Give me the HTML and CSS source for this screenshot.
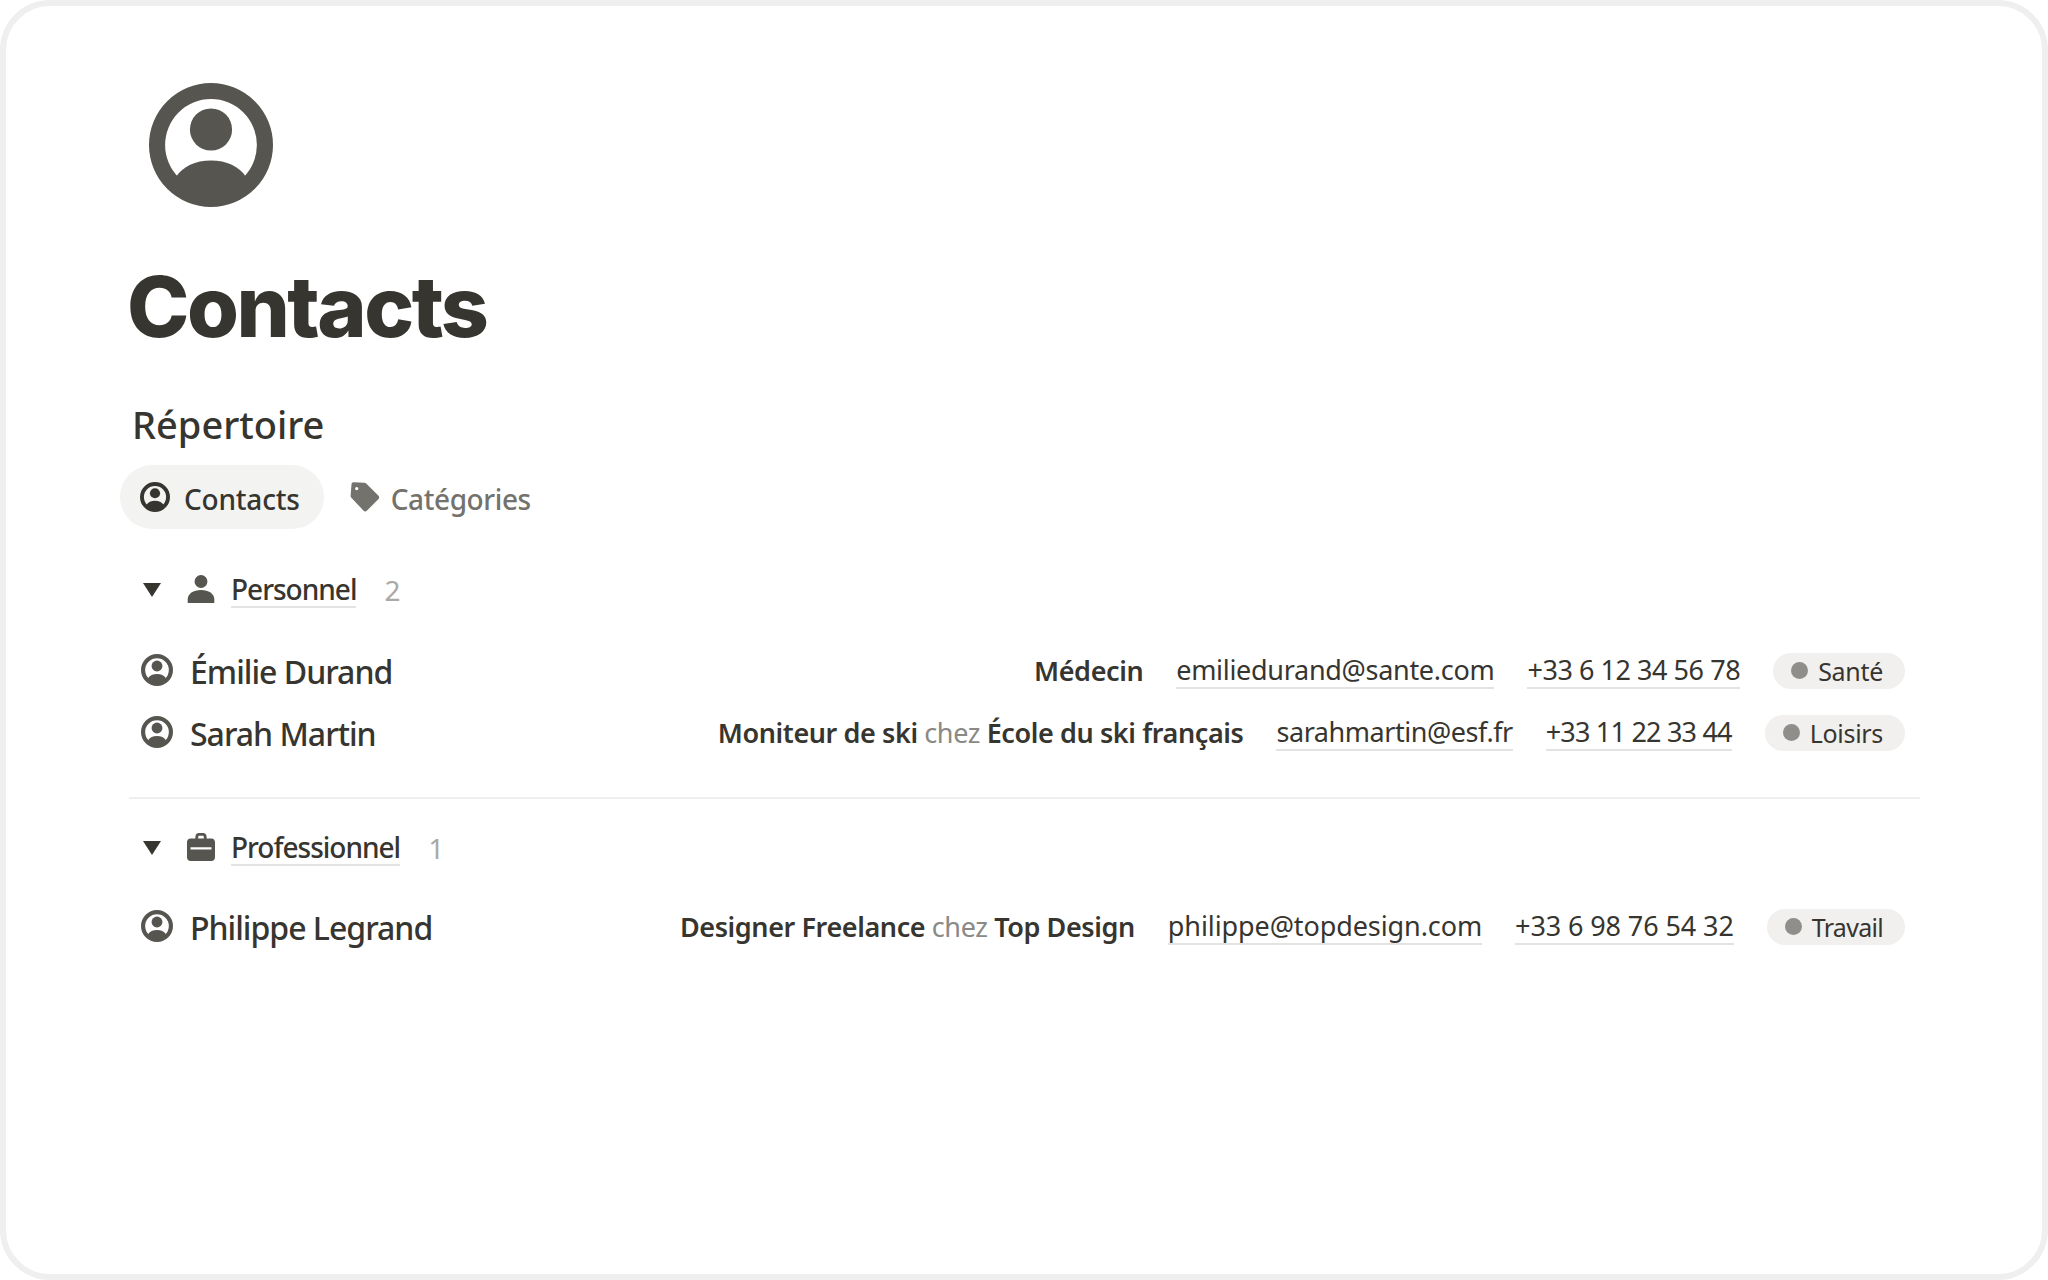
FILE: index.html
```html
<!DOCTYPE html>
<html lang="fr">
<head>
    <meta charset="UTF-8">
    <title>Contacts</title>
    <link rel="stylesheet" href="styles.css">
</head>
<body>
    <svg class="sprite" width="0" height="0">
        <symbol id="contact" viewBox="0 0 20 20">
            <path fill-rule="evenodd" d="M10 0a10 10 0 1 1 0 20a10 10 0 0 1 0-20zM10 2.6a7.4 7.4 0 1 0 0 14.8a7.4 7.4 0 0 0 0-14.8z"/>
            <ellipse cx="10" cy="7.5" rx="3.4" ry="3.4"/>
            <path d="M4.4 15.1C5.4 13.5 7.5 12.5 10 12.5S14.6 13.5 15.6 15.1L15 17.5H5z"/>
        </symbol>
    </svg>
    <main class="page">
        <svg class="avatar"><use href="#contact"/></svg>
        <h1 class="title">Contacts</h1>
        <h2 class="subtitle">Répertoire</h2>
        <nav class="tabs">
            <a class="tab tab-active"><svg class="tab-icon"><use href="#contact"/></svg>Contacts</a>
            <a class="tab">
                <svg class="tab-icon tag-icon" viewBox="0 0 20 20"><path fill-rule="evenodd" d="M1 1.5C1 .8 1.6.2 2.3.2L9.6.5c.5 0 .9.2 1.2.5l8.2 8.2c.6.6.6 1.500 0 2.100l-7.800 7.900c-.6.6-1.500.6-2.100 0L.9 10.500C.6 10.200.4 9.800.4 9.300zM4.500 3.300a1.100 1.100 0 1 0 0 2.200a1.100 1.100 0 0 0 0-2.200z"/></svg>Catégories
            </a>
        </nav>

        <section class="group">
            <div class="group-head">
                <span class="caret"></span>
                <svg class="group-icon" viewBox="0 0 20 20"><circle cx="10" cy="4.600" r="4.600"/><path d="M.5 20v-2.500C.5 13.500 4.500 10.800 10 10.800s9.500 2.700 9.500 6.700V20z"/></svg>
                <span class="group-name">Personnel</span>
                <span class="group-count">2</span>
            </div>
            <div class="row">
                <svg class="row-icon"><use href="#contact"/></svg>
                <span class="name">Émilie Durand</span>
                <div class="details">
                    <span class="job">Médecin</span>
                    <span class="link link-mid">emiliedurand@sante.com</span>
                    <span class="link">+33 6 12 34 56 78</span>
                    <span class="badge"><i class="dot"></i>Santé</span>
                </div>
            </div>
            <div class="row">
                <svg class="row-icon"><use href="#contact"/></svg>
                <span class="name">Sarah Martin</span>
                <div class="details">
                    <span class="job">Moniteur de ski <em>chez</em> École du ski français</span>
                    <span class="link">sarahmartin@esf.fr</span>
                    <span class="link link-tight">+33 11 22 33 44</span>
                    <span class="badge"><i class="dot"></i>Loisirs</span>
                </div>
            </div>
        </section>

        <section class="group group-next">
            <div class="group-head">
                <span class="caret"></span>
                <svg class="group-icon" viewBox="0 0 20 20"><path fill-rule="evenodd" d="M6 4V2.500C6 1.100 7.100 0 8.500 0h3C12.900 0 14 1.100 14 2.500V4h3.500C18.900 4 20 5.100 20 6.500v11c0 1.400-1.100 2.500-2.500 2.500h-15C1.100 20 0 18.900 0 17.500v-11C0 5.100 1.100 4 2.500 4zM8 4h4V2.800c0-.4-.3-.8-.8-.8H8.800c-.5 0-.8.4-.8.800zM2.500 10.200v1.600h15v-1.600z"/></svg>
                <span class="group-name">Professionnel</span>
                <span class="group-count">1</span>
            </div>
            <div class="row">
                <svg class="row-icon"><use href="#contact"/></svg>
                <span class="name">Philippe Legrand</span>
                <div class="details">
                    <span class="job">Designer Freelance <em>chez</em> Top Design</span>
                    <span class="link link-wide">philippe@topdesign.com</span>
                    <span class="link link-wide">+33 6 98 76 54 32</span>
                    <span class="badge badge-tight"><i class="dot"></i>Travail</span>
                </div>
            </div>
        </section>
    </main>
</body>
</html>
```

FILE: styles.css
```css
html, body {
    margin: 0;
    height: 100%;
    background: #fff;
}
body {
    font-family: "Noto Sans", sans-serif;
    color: #37352f;
}
.sprite {
    display: block;
    height: 0;
}
.page {
    box-sizing: border-box;
    height: 1280px;
    padding: 77px 122px 0 123px;
    border: 6px solid #efefef;
    border-radius: 50px;
}
.avatar {
    display: block;
    width: 124px;
    height: 124px;
    margin-left: 20px;
    fill: #56554f;
}
.title {
    margin: 56px 0 0 -2px;
    font-family: Inter, sans-serif;
    font-size: 84px;
    font-weight: 800;
    line-height: 88px;
    letter-spacing: -2.500px;
}
.subtitle {
    margin: 47px 0 0 3px;
    font-size: 38px;
    font-weight: 500;
    line-height: 52px;
}
.tabs {
    display: flex;
    gap: 6px;
    margin: 15px 0 0 -8px;
}
.tab {
    box-sizing: border-box;
    display: flex;
    align-items: center;
    gap: 14px;
    height: 64px;
    padding: 4px 24px 0 20px;
    border-radius: 32px;
    font-size: 28px;
    font-weight: 500;
    letter-spacing: -0.400px;
    color: #73726d;
}
.tab-active {
    background: #f3f3f2;
    color: #37352f;
    margin-left: -1px;
    letter-spacing: -0.200px;
}
.tab-icon {
    width: 30px;
    height: 30px;
    fill: #37352f;
    margin-top: -4px;
}
.tag-icon {
    margin-right: -3px;
    fill: #73726d;
}
.group {
    margin-top: 36px;
    padding-bottom: 33px;
    border-bottom: 2px solid #efefef;
}
.group-next {
    margin-top: 24px;
    border-bottom: 0;
}
.group-head {
    display: flex;
    align-items: center;
    height: 50px;
    margin-bottom: 25px;
    font-size: 28px;
}
.group-next .group-head {
    margin-bottom: 23px;
}
.caret {
    width: 0;
    height: 0;
    margin-left: 14px;
    margin-right: 2px;
    border-left: 9px solid transparent;
    border-right: 9px solid transparent;
    border-top: 14px solid #37352f;
}
.group-icon {
    width: 28px;
    height: 28px;
    margin-left: 24px;
    fill: #56554f;
    margin-top: -2px;
}
.group-name {
    margin-left: 16px;
    font-weight: 500;
    letter-spacing: -1px;
    border-bottom: 2px solid #e3e3e1;
    line-height: 34px;
}
.group-count {
    margin-left: 28px;
    color: #aaa9a6;
}
.row {
    display: flex;
    align-items: center;
    height: 62px;
    padding: 0 15px 0 12px;
}
.row-icon {
    width: 32px;
    height: 32px;
    margin-top: -2px;
    fill: #56554f;
}
.name {
    margin-left: 17px;
    margin-top: 1px;
    font-size: 32px;
    font-weight: 500;
    letter-spacing: -1px;
}
.details {
    display: flex;
    align-items: center;
    gap: 33px;
    margin-left: auto;
    font-size: 27px;
}
.job {
    margin-bottom: 2px;
    font-weight: 600;
    letter-spacing: -0.400px;
}
.job em {
    font-style: normal;
    font-weight: 400;
    color: #8a8985;
}
.link {
    border-bottom: 2px solid #e3e3e1;
    line-height: 34px;
    letter-spacing: -0.450px;
}
.link-mid {
    letter-spacing: -0.300px;
}
.link-tight {
    letter-spacing: -0.800px;
}
.link-wide {
    letter-spacing: -0.100px;
}
.badge {
    display: flex;
    align-items: center;
    gap: 10px;
    height: 36px;
    padding: 0 22px 0 18px;
    border-radius: 18px;
    background: #f1f0ee;
    font-size: 25px;
    letter-spacing: -0.300px;
}
.badge-tight {
    letter-spacing: -0.700px;
}
.dot {
    width: 17px;
    height: 17px;
    margin-top: -2px;
    border-radius: 50%;
    background: #8f8e8b;
}
```
